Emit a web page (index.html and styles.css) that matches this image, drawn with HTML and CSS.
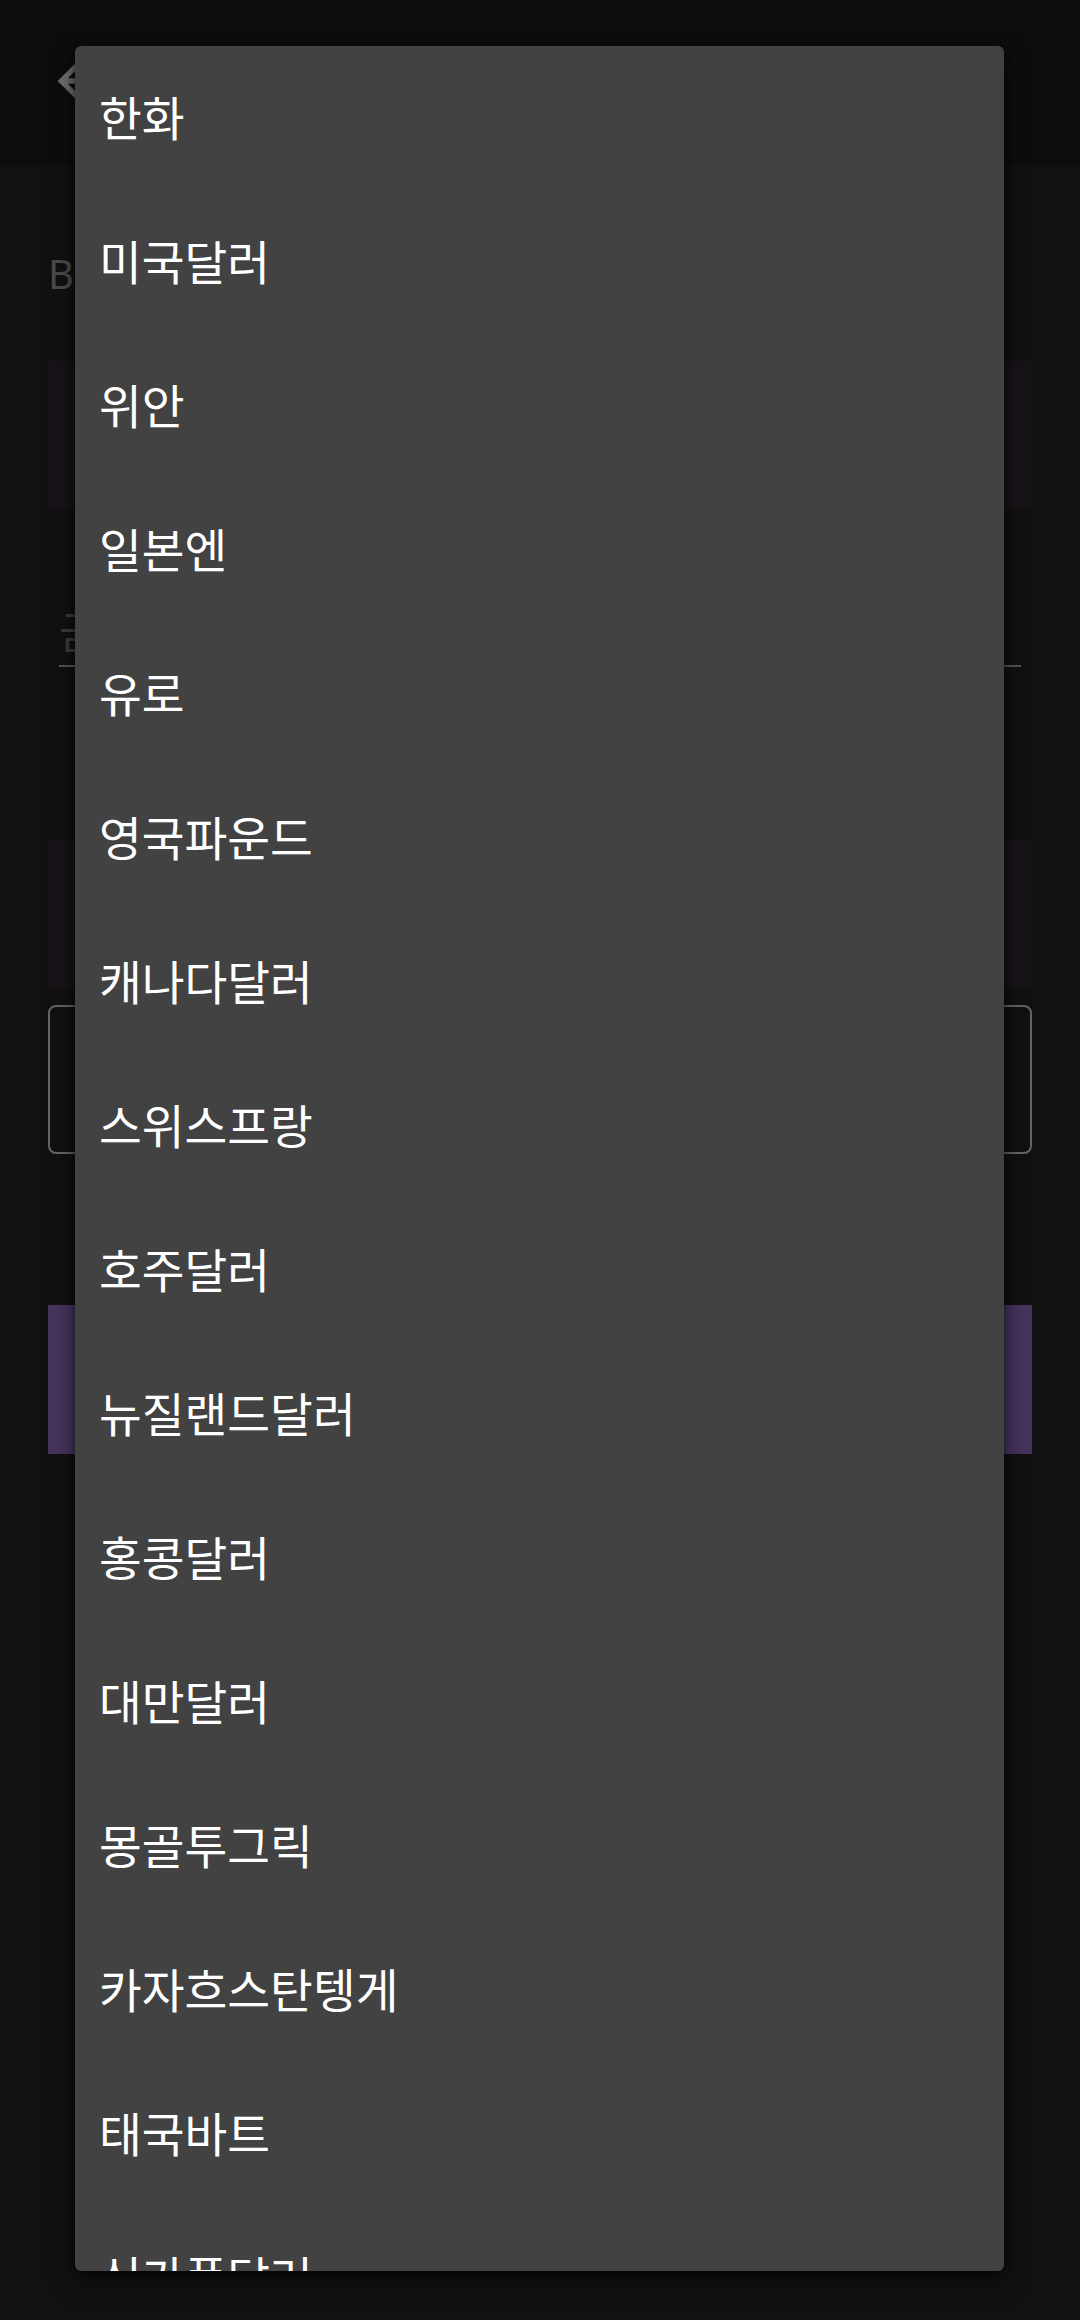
FILE: index.html
```html
<!DOCTYPE html>
<html lang="ko">
<head>
<meta charset="utf-8">
<title>통화 선택</title>
<link rel="stylesheet" href="styles.css">
</head>
<body>
<div class="page">
  <header class="toolbar">
    <svg class="back" width="64" height="64" viewBox="0 0 24 24">
      <path d="M20 11H7.83l5.59-5.59L12 4l-8 8 8 8 1.41-1.41L7.83 13H20v-2z" fill="#6f6f6f"/>
    </svg>
  </header>
  <main class="content">
    <div class="label">Base</div>
    <div class="tile"></div>
    <div class="field">금액</div>
    <div class="tile tile-second"></div>
    <div class="outlined"></div>
    <div class="button"></div>
  </main>

  <ul class="menu">
    <li class="item">한화</li>
    <li class="item">미국달러</li>
    <li class="item">위안</li>
    <li class="item">일본엔</li>
    <li class="item">유로</li>
    <li class="item">영국파운드</li>
    <li class="item">캐나다달러</li>
    <li class="item">스위스프랑</li>
    <li class="item">호주달러</li>
    <li class="item">뉴질랜드달러</li>
    <li class="item">홍콩달러</li>
    <li class="item">대만달러</li>
    <li class="item">몽골투그릭</li>
    <li class="item">카자흐스탄텡게</li>
    <li class="item">태국바트</li>
    <li class="item">싱가폴달러</li>
  </ul>
</div>
</body>
</html>
```

FILE: styles.css
```css
* {
  box-sizing: border-box;
}

html, body {
  margin: 0;
  padding: 0;
  background: #111111;
}

body {
  font-family: "Noto Sans", "Noto Sans CJK KR", sans-serif;
}

.page {
  position: relative;
  width: 1080px;
  height: 2320px;
  overflow: hidden;
  background: #111111;
}

.toolbar {
  height: 166px;
  background: #0d0d0d;
  display: flex;
  align-items: center;
  padding-left: 47px;
  padding-bottom: 4px;
}

.back {
  display: block;
}

.content {
  padding: 0 48px;
  display: flex;
  flex-direction: column;
}

.label {
  margin-top: 85px;
  font-size: 40px;
  line-height: 46px;
  color: #4b4b4b;
}

.tile {
  margin-top: 64px;
  height: 149px;
  background: #171318;
}

.field {
  margin: 90px 11px 0 11px;
  height: 67px;
  border-bottom: 2px solid #555555;
  font-family: "Noto Sans CJK KR", sans-serif;
  font-size: 44px;
  line-height: 60px;
  color: #3c3c3c;
}

.tile-second {
  margin-top: 173px;
}

.outlined {
  margin-top: 16px;
  height: 149px;
  border: 2px solid #666666;
  border-radius: 8px;
}

.button {
  margin-top: 151px;
  height: 149px;
  background: #46345e;
}

.menu {
  position: absolute;
  left: 75px;
  top: 46px;
  width: 929px;
  height: 2225px;
  margin: 0;
  padding: 0;
  list-style: none;
  background: #424242;
  border-radius: 6px;
  overflow: hidden;
  box-shadow: 0 10px 24px rgba(0, 0, 0, 0.55), 0 2px 6px rgba(0, 0, 0, 0.4);
}

.item {
  height: 144px;
  display: flex;
  align-items: center;
  padding-left: 24px;
  padding-bottom: 6px;
  font-family: "Noto Sans CJK KR", sans-serif;
  font-size: 46.5px;
  color: #ffffff;
  flex-shrink: 0;
}
```
